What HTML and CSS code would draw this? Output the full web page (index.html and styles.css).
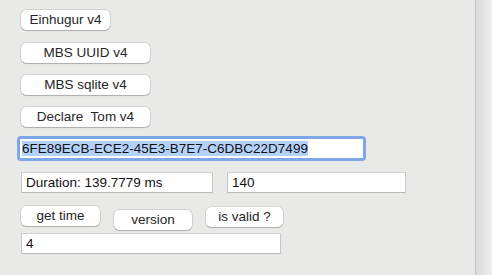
FILE: index.html
```html
<!DOCTYPE html>
<html>
  <head>
    <meta charset="utf-8">
    <title>UUID Test</title>
    <link rel="stylesheet" href="styles.css">
  </head>
  <body>
    <div class="window">
      <div class="pane">
        <button class="btn b-einhugur" type="button">Einhugur v4</button>
        <button class="btn b-wide" type="button">MBS UUID v4</button>
        <button class="btn b-wide" type="button">MBS sqlite v4</button>
        <button class="btn b-wide" type="button">Declare&nbsp; Tom v4</button>
        <div class="focus-ring">
          <div class="field field-uuid"><span class="sel">6FE89ECB-ECE2-45E3-B7E7-C6DBC22D7499</span></div>
        </div>
        <div class="row fields">
          <div class="field field-duration">Duration: 139.7779 ms</div>
          <div class="field field-count">140</div>
        </div>
        <div class="row actions">
          <button class="btn b-time" type="button">get time</button>
          <button class="btn b-version" type="button">version</button>
          <button class="btn b-valid" type="button">is valid ?</button>
        </div>
        <div class="field field-result">4</div>
      </div>
      <div class="sidebar"></div>
    </div>
  </body>
</html>
```

FILE: styles.css
```css
* {
  box-sizing: border-box;
}
body {
  margin: 0;
  font-family: "Liberation Sans", Arial, sans-serif;
  font-size: 13.5px;
  color: #222;
  background: #e9e9e8;
}
.window {
  display: flex;
  height: 275px;
}
.pane {
  width: 475px;
  padding: 10px 0 0 21px;
  display: flex;
  flex-direction: column;
  align-items: flex-start;
}
.sidebar {
  flex: 1;
  border-left: 1px solid #c4c4c4;
  background: linear-gradient(to right, #d8d8d8, #e8e8e8 60%, #ededed);
}
.btn {
  height: 20px;
  padding: 0;
  font-family: inherit;
  font-size: 13.5px;
  color: #262626;
  background: #fff;
  border: none;
  border-radius: 5px;
  box-shadow: 0 0 0 0.5px rgba(0, 0, 0, 0.18), 0 1px 1px rgba(0, 0, 0, 0.18);
  line-height: 20px;
  text-align: center;
}
.b-einhugur {
  width: 89px;
}
.b-wide {
  width: 129px;
  margin-top: 13px;
}
.b-wide + .b-wide {
  margin-top: 12px;
}
.focus-ring {
  margin: 9px 0 0 -4px;
  padding: 3px;
  border-radius: 4px;
  background: #7fa6e6;
}
.field {
  height: 21px;
  padding: 0 4px;
  background: #fff;
  border: 1px solid #c8c8c8;
  border-top-color: #d4d4d4;
  border-bottom-color: #b8b8b8;
  line-height: 19px;
  white-space: nowrap;
  color: #111;
}
.field-uuid {
  width: 343px;
  height: 19px;
  border: none;
  padding: 0 2px;
  line-height: 19px;
}
.sel {
  background: #b3d2fb;
}
.row {
  display: flex;
  gap: 14px;
}
.fields {
  margin-top: 11px;
}
.field-duration {
  width: 192px;
}
.field-count {
  width: 179px;
}
.actions {
  margin-top: 13px;
  align-items: flex-start;
}
.b-time {
  width: 79px;
}
.b-version {
  width: 78px;
  margin-top: 4px;
}
.b-valid {
  width: 77px;
  margin-top: 1px;
}
.field-result {
  width: 260px;
  margin-top: 3px;
}
```
